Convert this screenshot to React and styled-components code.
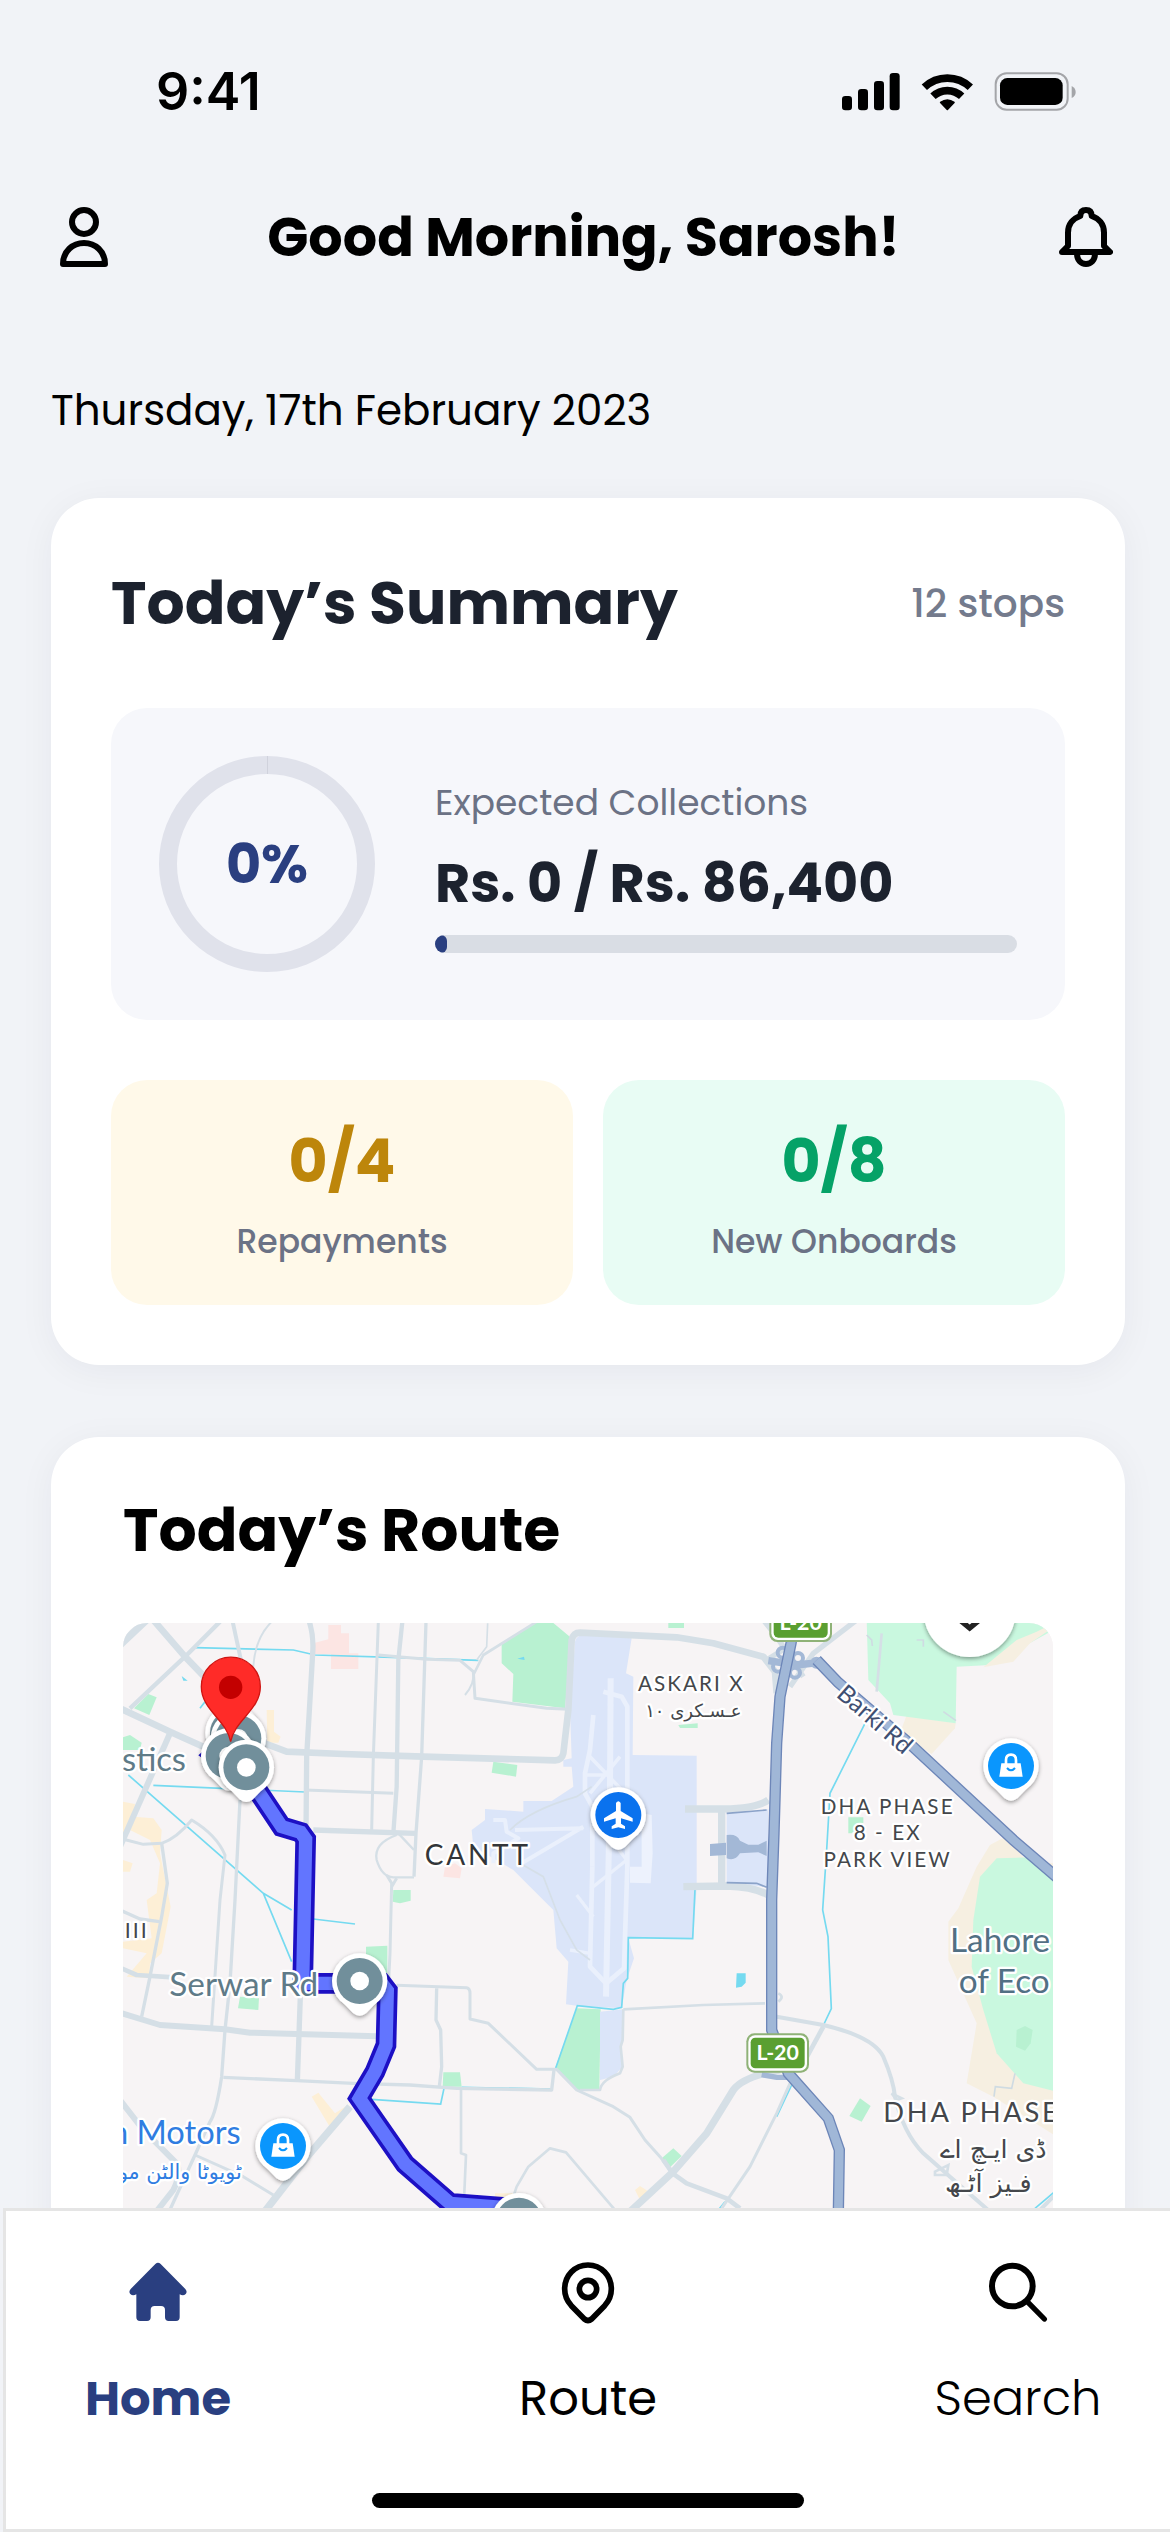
import React from 'react';
import styled, { createGlobalStyle } from 'styled-components';

const GlobalStyle = createGlobalStyle`
  * {
    box-sizing: border-box;
  }

  body {
    margin: 0;
    background: #f1f3f7;
    color: #000;
    font-family: 'Poppins', 'Inter', sans-serif;
  }

  h1, h2, p {
    margin: 0;
  }
`;

// Layout
const Screen = styled.div`
  display: flex;
  flex-direction: column;
  height: 100vh;
`;

const Scroll = styled.main`
  flex: 1;
  min-height: 0;
  overflow-y: auto;
  scrollbar-width: none;
`;

const Content = styled.div`
  display: flex;
  flex-direction: column;
  gap: 72px;
  padding: 0 45px 72px 51px;
`;

// Top of the screen
const StatusBar = styled.div`
  display: flex;
  align-items: center;
  justify-content: space-between;
  height: 183px;
  padding: 0 94px 0 156px;
`;

const Clock = styled.span`
  font-family: 'Inter', sans-serif;
  font-size: 52px;
  font-weight: 600;
`;

const TopBar = styled.header`
  display: flex;
  align-items: center;
  justify-content: space-between;
  height: 108px;
  padding: 0 57px 0 60px;
`;

const Greeting = styled.h1`
  font-size: 54px;
  font-weight: 700;
  line-height: 72px;
`;

const IconButton = styled.button`
  display: flex;
  padding: 0;
  border: 0;
  background: none;
  color: inherit;
  cursor: pointer;
`;

const DateLine = styled.p`
  padding: 90px 51px 57px;
  font-size: 42px;
  line-height: 60px;
`;

// Cards
const Card = styled.section`
  padding: ${(props) => props.$padding};
  border-radius: 48px;
  background: #fff;
  box-shadow: 0 6px 36px rgba(20, 20, 50, 0.05);
`;

const CardHeader = styled.div`
  display: flex;
  align-items: center;
  justify-content: space-between;
  margin-bottom: ${(props) => props.$gap};
`;

const CardTitle = styled.h2`
  color: ${(props) => props.$color};
  font-size: 60px;
  font-weight: 700;
  line-height: 90px;
`;

const StopCount = styled.span`
  color: #747b8d;
  font-size: 39px;
  font-weight: 500;
`;

const Collections = styled.div`
  display: flex;
  align-items: center;
  gap: 60px;
  margin-bottom: 60px;
  padding: 48px;
  border-radius: 36px;
  background: #f6f7fb;
`;

const Ring = styled.div`
  position: relative;
  display: flex;
  flex: none;
  align-items: center;
  justify-content: center;
  width: 216px;
  height: 216px;
  border: 18px solid #e0e2eb;
  border-radius: 50%;

  &::before {
    content: '';
    position: absolute;
    top: -18px;
    left: 50%;
    width: 1px;
    height: 18px;
    background: #d0d2dc;
  }
`;

const Percent = styled.span`
  color: #2a3f80;
  font-size: 54px;
  font-weight: 700;
`;

const CollectionInfo = styled.div`
  flex: 1;
`;

const CollectionLabel = styled.p`
  color: #6b7285;
  font-size: 36px;
  line-height: 56px;
`;

const Amount = styled.p`
  margin: 16px 0;
  color: #1c222e;
  font-size: 54px;
  font-weight: 700;
  line-height: 72px;
`;

const Track = styled.div`
  height: 18px;
  overflow: hidden;
  border-radius: 9px;
  background: #d9dde4;
`;

const Fill = styled.div`
  min-width: 12px;
  height: 100%;
  border-radius: 9px;
  background: #2a3f80;
`;

const Stats = styled.div`
  display: grid;
  grid-template-columns: 1fr 1fr;
  gap: 30px;
`;

const Stat = styled.div`
  padding: 36px 0 39px;
  border-radius: 36px;
  background: ${(props) => props.$background};
  text-align: center;
`;

const StatValue = styled.p`
  margin-bottom: 12px;
  color: ${(props) => props.$color};
  font-size: 60px;
  font-weight: 700;
  line-height: 90px;
`;

const StatLabel = styled.p`
  color: #6b7285;
  font-size: 33px;
  font-weight: 500;
  line-height: 48px;
`;

// Map
const MapFrame = styled.div`
  height: 660px;
  overflow: hidden;
  border-radius: 24px;
  background: #f7f4f5;
`;

const MapSvg = styled.svg`
  display: block;
  width: 100%;
  height: 100%;
  font-family: 'Lato', 'Inter', sans-serif;
`;

const MapLabel = styled.text`
  fill: ${(props) => props.$color || '#44474b'};
  stroke: #fff;
  stroke-width: 14px;
  stroke-linejoin: round;
  paint-order: stroke;
  font-size: ${(props) => props.$size}px;
  font-weight: 400;
  letter-spacing: ${(props) => (props.$tracked ? '0.1em' : 'normal')};
`;

const ArabicLabel = styled(MapLabel)`
  font-family: 'DejaVu Sans', sans-serif;
`;

// Bottom navigation
const BottomBar = styled.footer`
  flex: none;
  margin-left: 3px;
  padding-top: 51px;
  padding-bottom: 21px;
  border: solid #e5e5e5;
  border-width: 3px 0 3px 3px;
  background: #fff;
`;

const Nav = styled.nav`
  display: flex;
  justify-content: space-between;
  padding: 0 62px;
`;

const NavLink = styled.a`
  display: flex;
  flex-direction: column;
  align-items: center;
  gap: 41px;
  width: 180px;
  color: ${(props) => (props.$active ? '#2a3f80' : '#000')};
  font-size: 48px;
  font-weight: ${(props) => props.$weight};
  line-height: 72px;
  text-decoration: none;

  svg {
    overflow: visible;
  }
`;

const HomeIndicator = styled.div`
  width: 432px;
  height: 15px;
  margin: 58px auto 0;
  border-radius: 8px;
  background: #000;
`;

const StatusIcons = () => (
  <svg width="234" height="39" viewBox="67 66 702 117" aria-hidden="true">
    <rect x="67" y="138" width="30" height="43" rx="10" />
    <rect x="115" y="117" width="30" height="64" rx="10" />
    <rect x="163" y="93" width="30" height="88" rx="10" />
    <rect x="210" y="69" width="30" height="112" rx="10" />
    <path d="M314 112A100 100 0 0 1 452 112" fill="none" stroke="#000" strokeWidth="23" />
    <path d="M340 139A62 62 0 0 1 426 139" fill="none" stroke="#000" strokeWidth="23" />
    <path d="M363 157Q383 143 403 157L383 178Z" stroke="#000" strokeWidth="5" strokeLinejoin="round" />
    <rect x="528" y="70" width="216" height="109" rx="33" fill="none" stroke="#a4a5a9" strokeWidth="6" />
    <rect x="541" y="84" width="188" height="81" rx="22" />
    <path d="M756 108Q768 114 768 126Q768 138 756 144Z" fill="#a4a5a9" />
  </svg>
);

const UserIcon = () => (
  <svg width="48" height="60" viewBox="60 51 144 180" fill="none" stroke="currentColor" strokeWidth="18" strokeLinejoin="round">
    <circle cx="132" cy="96" r="36" />
    <path d="M69 222H195C195 184 166 159 132 159S69 184 69 222Z" />
  </svg>
);

const BellIcon = () => (
  <svg width="54" height="60" viewBox="717 471 162 180" fill="none" stroke="currentColor" strokeWidth="18" strokeLinejoin="round">
    <path d="M726 606L744 588V548C744 522 760 505 781 498C781 486 787 480 798 480S815 486 815 498C836 505 852 522 852 548V588L870 606Z" />
    <path d="M771 610C771 631 783 642 798 642S825 631 825 610" />
  </svg>
);

const HomeIcon = () => (
  <svg width="60" height="60" viewBox="83 66 180 180" fill="currentColor">
    <path d="M165 72Q173 65 181 72L255 147Q262 155 256 162Q249 169 238 163V232Q238 243 227 243H205Q194 243 194 232V210Q194 198 182 198H163Q151 198 151 210V232Q151 243 140 243H119Q108 243 108 232V163Q97 169 90 162Q84 155 91 147Z" />
  </svg>
);

const PinIcon = () => (
  <svg width="54" height="60" viewBox="59 66 162 180" fill="none" stroke="currentColor" strokeWidth="17" strokeLinejoin="round">
    <path d="M140 75C100 75 70 107 70 147C70 167 78 184 90 197L129 237Q140 246 151 237L190 197C202 184 210 167 210 147C210 107 180 75 140 75Z" />
    <circle cx="140" cy="147" r="26" />
  </svg>
);

const SearchIcon = () => (
  <svg width="60" height="60" viewBox="1299 66 180 180" fill="none" stroke="currentColor" strokeWidth="18" strokeLinecap="round">
    <circle cx="1372" cy="138" r="61" />
    <path d="M1419 187L1468 237" strokeWidth="16" />
  </svg>
);

const Marker = ({ x, y, color, children }) => (
  <g transform={`translate(${x} ${y})`}>
    <g filter="url(#markerShadow)" fill="#fff">
      <circle r="83" />
      <path d="M-70 44L-20 96Q0 112 20 96L70 44Z" />
    </g>
    <circle r="69" fill={color} />
    {children}
  </g>
);

const StopMarker = ({ x, y }) => (
  <Marker x={x} y={y} color="#718f9b">
    <circle r="28" fill="#fff" />
  </Marker>
);

const ShopMarker = ({ x, y }) => (
  <Marker x={x} y={y} color="#0a96fd">
    <path d="M-29 -8H29L35 32H-35Z" fill="#fff" />
    <path d="M-15 -5V-18Q-15 -34 0 -34T15 -18V-5" fill="none" stroke="#fff" strokeWidth="8" />
    <path d="M-12 6Q0 20 12 6" fill="none" stroke="#0a96fd" strokeWidth="6" />
  </Marker>
);

const RoadShield = ({ x, y }) => (
  <g transform={`translate(${x} ${y})`}>
    <rect x="-94" y="-59" width="188" height="118" rx="24" fill="#8fb277" />
    <rect x="-88" y="-53" width="176" height="106" rx="20" fill="#fff" />
    <rect x="-81" y="-46" width="162" height="92" rx="14" fill="#5a9f31" />
    <text y="22" textAnchor="middle" fill="#fff" fontSize="64" fontWeight="700">L-20</text>
  </g>
);

const ROUTE = 'M395 490L435 560L515 680L572 697L587 718L578 1150H815L832 1172L828 1335L795 1415L748 1495L885 1692L1020 1810L1220 1825';

const roads = [
  { width: 22, d: 'M30 135L115 55' },
  { width: 13, d: 'M60 325L225 170L330 65' },
  { width: 20, d: 'M130 60L225 170L360 310' },
  { width: 12, d: 'M368 65L395 190' },
  { width: 6, d: 'M485 65Q435 115 430 200' },
  { width: 16, d: 'M598 65Q612 110 608 160L590 470L588 700' },
  { width: 20, d: 'M30 325L180 395L290 445' },
  { width: 20, d: 'M450 425L530 455L700 462L940 470L1335 481Q1356 480 1360 460L1375 330L1385 120Q1390 98 1410 98L1700 112L1810 130L1960 170L1995 215L2000 280' },
  { width: 18, d: 'M180 400L30 740' },
  { width: 9, d: 'M805 65L790 470L785 690' },
  { width: 13, d: 'M877 65L865 180L860 560L850 700' },
  { width: 10, d: 'M948 65L935 470L918 700L912 830' },
  { width: 9, d: 'M805 165L950 178L1050 181L1090 215L1095 295L1310 325L1375 328' },
  { width: 8, d: 'M1280 65L1120 165L1090 225' },
  { width: 5, d: 'M1133 70L1130 140L1100 180' },
  { width: 6, d: 'M1090 215Q1095 250 1065 285' },
  { width: 9, d: 'M585 570L850 580' },
  { width: 16, d: 'M610 690L915 700' },
  { width: 7, d: 'M860 705Q790 730 800 780Q815 830 850 832H912M865 700L912 750' },
  { width: 9, d: 'M830 825L845 850L840 1060L835 1160M860 835L845 860' },
  { width: 9, d: 'M30 715L100 733L155 730Q200 715 245 660Q320 705 345 765L330 900L305 1280' },
  { width: 10, d: 'M155 730L172 850L155 950L120 1130L95 1250' },
  { width: 10, d: 'M390 600L375 900L360 1150L345 1290L335 1430Q318 1540 300 1565L255 1665L175 1840' },
  { width: 10, d: 'M30 930L90 957L148 965' },
  { width: 14, d: 'M30 1103L80 1125L190 1132' },
  { width: 18, d: 'M30 1238L150 1275L345 1288L420 1298L560 1302L800 1309' },
  { width: 16, d: 'M572 1160L562 1445' },
  { width: 10, d: 'M340 1432L560 1442L730 1450L900 1455L1040 1465L1325 1470L1332 1410' },
  { width: 9, d: 'M860 1156L1070 1163Q1080 1165 1080 1180V1257L1135 1270L1280 1408H1340L1400 1470L1510 1520L1560 1552L1605 1620L1650 1670L1688 1720' },
  { width: 10, d: 'M980 1165L978 1260L992 1290L995 1400L988 1460' },
  { width: 8, d: 'M1053 1470V1660L1068 1665L1062 1800' },
  { width: 8, d: 'M1210 1790L1220 1760L1255 1700L1320 1645L1368 1657L1515 1830' },
  { width: 22, d: 'M720 1520L600 1660L460 1840' },
  { width: 18, d: 'M30 1500L100 1590L200 1690Q215 1720 190 1770L135 1840' },
  { width: 9, d: 'M255 1665L400 1730L490 1785' },
  { width: 16, d: 'M1960 60L2000 110L2080 230M2240 60L2110 160L2040 260M1970 180L2050 130' },
  { width: 22, d: 'M1725 627H1840Q1940 625 1975 600M1835 627V860M1720 860L1850 858Q1930 860 1975 885' },
  { width: 8, d: 'M1540 1228L1780 1215L1965 1210M1540 1228L1538 1320L1532 1340L1538 1400L1530 1420Q1475 1440 1470 1470H1410' },
  { width: 12, d: 'M2000 1250L2140 1275Q2290 1310 2320 1370Q2350 1440 2355 1490Q2380 1600 2440 1660L2520 1730L2640 1835' },
  { width: 14, d: 'M2140 1280L2080 1390' },
  { width: 22, d: 'M2010 1410Q1900 1430 1870 1470L1790 1600L1690 1715L1560 1835' },
  { width: 9, d: 'M2040 1450L2000 1540L1920 1700L1835 1825' },
  { width: 14, d: 'M1660 1680L1688 1720L1730 1750L1850 1795L1890 1825' },
  { width: 8, d: 'M2315 100L2300 275' },
  { width: 12, d: 'M2790 1830L2840 1780' },
];

const parks = [
  'M1175 130L1275 69H1330L1385 115L1365 325L1207 305L1210 222L1175 190Z',
  'M115 282L140 292L118 345L72 325Z',
  'M39 412L60 405L95 428L90 450H39Z',
  'M1150 485L1222 495L1218 530L1145 518Z',
  'M850 870H902V902L870 910L848 905Z',
  'M768 1040L832 1037V1120H768Z',
  'M390 1190L447 1192L445 1230L384 1225Z',
  'M1000 1417H1050L1055 1460H998Z',
  'M1400 1225L1472 1228L1468 1470H1400L1335 1405Z',
  'M1675 69H1722V84H1675Z',
  'M2215 652H2260V670L2225 700H2215Z',
  'M2250 1495L2282 1518L2255 1565L2218 1548Z',
  'M1690 1645L1715 1668L1680 1702L1655 1675Z',
  'M1705 375L1763 370V384H1710Z',
];

const golf = [
  'M2270 60H2840V85L2640 195L2540 200L2537 370L2350 345L2340 310L2275 240Z',
  'M2840 810L2760 772L2660 775L2610 830L2590 960L2585 1100L2620 1230L2660 1360L2740 1450L2840 1475Z',
];

const waterways = [
  'M255 143L550 150L615 165L870 173L1105 181',
  'M130 556L585 576',
  'M55 525L460 880L545 930M460 880L545 1085M610 957L735 972',
  'M270 325L285 305',
  'M785 1498L992 1512L1002 1465M1055 1462L1325 1467M1337 1405L1402 1217L1510 1228L1535 1222L1540 1150L1553 1135L1555 1013L1748 1016L1755 868',
  'M2265 370L2160 580L2150 750L2138 930L2154 1010L2164 1226L2142 1272',
  'M2045 1455L2000 1550M1845 1805L1825 1830M2775 1825L2840 1770',
];

const RouteMap = () => (
  <MapFrame>
    <MapSvg viewBox="39 69 2790 1980" preserveAspectRatio="xMidYMin slice" role="img" aria-label="Map of today's route">
      <defs>
        <filter id="markerShadow" x="-30%" y="-30%" width="160%" height="170%">
          <feDropShadow dx="0" dy="5" stdDeviation="6" floodOpacity="0.4" />
        </filter>
      </defs>
      <rect x="39" y="69" width="2790" height="1980" fill="#f7f4f5" />

      <g fill="#fdefd6">
        <path d="M470 330H492V395L512 410L505 428H472Z" />
        <path d="M39 605L75 612L70 650L130 655L155 690L150 760L182 920L155 1060L120 1090L118 1135L50 1130L110 1060L39 1045V1025L125 1015L110 900L140 880L150 790L120 720L60 690L39 700Z" />
        <path d="M39 780L68 790L60 815H39ZM605 1490L625 1478L675 1540L705 1520L720 1535L665 1590Z" />
        <path d="M1155 1780H1210V1800H1155ZM1575 1770L1590 1758L1612 1772L1590 1800Z" />
      </g>
      <g fill="#fce5e3">
        <path d="M655 75H693V100H717V160H745V207H663V162H615V128L655 118Z" />
        <path d="M1005 800L1035 790L1055 805L1050 835L1000 830Z" />
      </g>
      <g fill="#f6efe1">
        <path d="M2390 345L2537 370L2535 385L2465 462L2370 400Z" />
        <path d="M2840 790L2750 785L2690 708L2640 735L2600 800L2545 925L2515 965V1080L2600 1270L2570 1450L2650 1490L2840 1610Z" />
      </g>
      <g fill="#b8f1d1">
        {parks.map((d) => <path key={d} d={d} />)}
      </g>
      <g fill="#c9f8df">
        {golf.map((d) => <path key={d} d={d} />)}
      </g>
      <path d="M2840 65L2780 95L2720 120L2620 202L2710 185L2760 130L2840 75Z" fill="#f6efe1" />
      <path d="M2720 1290L2745 1278L2768 1290L2762 1330L2745 1352L2718 1340Z" fill="#b8f1d1" />

      <path d="M1395 125Q1400 105 1420 105L1565 115L1548 220L1570 230L1568 465L1760 467V860L1750 1015H1555L1572 1075L1550 1140L1535 1225L1400 1217L1368 1213L1375 1085L1340 1045L1330 930L1260 860L1210 810L1090 740L1085 690L1125 660V627L1240 635V603H1325L1390 560L1385 500H1360V480L1385 475L1380 330Z" fill="#dbe5f9" />
      <path d="M1850 640L1975 628V862L1850 848ZM1470 1235L1540 1228L1538 1320L1530 1345L1538 1400L1510 1430L1470 1440Z" fill="#dbe5f9" />
      <path d="M1595 640L1625 645L1628 760L1622 850L1560 848V800H1595Z" fill="#edf2fd" />
      <g fill="none" stroke="#eaf0fc" strokeWidth="14" strokeLinejoin="round">
        <path d="M1502 235L1500 560L1488 1190" strokeWidth="18" />
        <path d="M1480 275L1535 290L1552 320L1552 800L1542 1105L1488 1150L1440 1100L1447 800" />
        <path d="M1450 345L1440 450L1425 520V580L1447 620V800" />
        <path d="M1440 470L1545 580M1440 580L1530 470M1430 525H1490" strokeWidth="11" />
        <path d="M1150 660H1185L1190 695L1225 715L1150 760V790M1215 690L1420 685M1235 790L1420 680" strokeWidth="12" />
        <path d="M1400 885L1450 950M1450 650L1550 780M1450 860L1550 780M1380 1050L1440 1060" strokeWidth="10" />
      </g>
      <path d="M1200 690Q1260 630 1400 590L1445 560" fill="none" stroke="#d5dfe8" strokeWidth="5" />
      <path d="M1230 790L1300 830L1350 960L1400 1050L1440 1080" fill="none" stroke="#d5dfe8" strokeWidth="5" />

      <g fill="none" stroke="#75daf0" strokeWidth="5">
        {waterways.map((d) => <path key={d} d={d} />)}
      </g>
      <path d="M1880 1120H1907V1148L1895 1160L1878 1163ZM215 228L233 242H220ZM1222 176L1242 170L1244 180Z" fill="#75daf0" />

      <g fill="none" stroke="#d5dfe6" strokeLinejoin="round">
        {roads.map((road) => <path key={road.d} d={road.d} strokeWidth={road.width} />)}
      </g>
      <path d="M2270 105L2285 120L2287 138M2420 120H2440V140M2500 335L2538 362M2652 1490L2656 1460L2705 1465L2715 1420" fill="none" stroke="#cfdbe2" strokeWidth="5" />
      <path d="M2360 1500L2345 1480L2375 1495ZM2475 1715L2515 1695L2510 1725H2475ZM2005 1180Q2025 1190 2005 1205" fill="none" stroke="#d5dfe6" strokeWidth="8" />

      <path d="M1850 705Q1880 700 1890 722L1915 734H1945L1970 722V768L1945 757L1890 760Q1875 785 1850 775ZM1800 732L1848 728V765L1800 768Z" fill="#a3b8d6" />
      <path d="M1850 640L1970 630M1850 848L1940 850L1970 862" fill="none" stroke="#8ba3c9" strokeWidth="5" />
      <g fill="none" stroke="#a3b8d6" strokeWidth="12">
        <circle cx="2018" cy="158" r="15" />
        <circle cx="2064" cy="174" r="15" />
        <circle cx="2004" cy="200" r="15" />
        <circle cx="2055" cy="218" r="15" />
        <path d="M1975 182L2060 195L2125 188" strokeWidth="22" />
        <path d="M1955 1424L2000 1432H2060" strokeWidth="16" />
      </g>
      <circle cx="2119" cy="188" r="18" fill="#a3b8d6" />
      {['M2055 60L2043 130L2010 290L2000 430L1992 700L1985 900V1290L2035 1420L2155 1555L2188 1650L2185 1840', 'M2120 180L2185 248L2400 432L2710 720L2850 840'].map((d) => (
        <g key={d} fill="none">
          <path d={d} stroke="#6d86b8" strokeWidth="34" />
          <path d={d} stroke="#a0b7d7" strokeWidth="26" />
        </g>
      ))}

      <path d={ROUTE} fill="none" stroke="#1d10c4" strokeWidth="62" />
      <path d={ROUTE} fill="none" stroke="#6275ff" strokeWidth="40" />
      <path d="M265 466L276 456V474Z" fill="#1d10c4" />

      <MapLabel x="228" y="513" textAnchor="end" $size="98" $color="#5f7b88">stics</MapLabel>
      <MapLabel x="44" y="1015" $size="64" $tracked>III</MapLabel>
      <MapLabel x="178" y="1187" $size="100" $color="#5f7b88">Serwar Rd</MapLabel>
      <MapLabel x="944" y="795" $size="84" $tracked $color="#333639">CANTT</MapLabel>
      <MapLabel x="392" y="1633" textAnchor="end" $size="98" $color="#2f7de1">n Motors</MapLabel>
      <ArabicLabel x="395" y="1738" direction="rtl" $size="62" $color="#2f7de1">ٹویوٹا والٹن مو</ArabicLabel>

      <MapLabel x="1744" y="274" textAnchor="middle" $size="62" $tracked>ASKARI X</MapLabel>
      <ArabicLabel x="1750" y="352" direction="rtl" textAnchor="middle" $size="54">عـسـکری ۱۰</ArabicLabel>
      <MapLabel x="2333" y="641" textAnchor="middle" $size="62" $tracked>DHA PHASE</MapLabel>
      <MapLabel x="2333" y="721" textAnchor="middle" $size="62" $tracked>8 - EX</MapLabel>
      <MapLabel x="2333" y="800" textAnchor="middle" $size="62" $tracked>PARK VIEW</MapLabel>
      <MapLabel x="2520" y="1056" $size="100" $color="#527084">Lahore</MapLabel>
      <MapLabel x="2546" y="1179" $size="100" $color="#527084">of Eco</MapLabel>
      <MapLabel x="2320" y="1565" $size="82" $tracked>DHA PHASE</MapLabel>
      <ArabicLabel x="2810" y="1675" direction="rtl" $size="76">ڈی ایـچ اے</ArabicLabel>
      <ArabicLabel x="2765" y="1775" direction="rtl" $size="76">فـیز آٹـھ</ArabicLabel>
      <MapLabel x="0" y="0" transform="translate(2176 288) rotate(41)" $size="74" $color="#3f4f72">Barki Rd</MapLabel>

      <Marker x={1525} y={645} color="#0a72ee">
        <path d="M-7 -36Q0 -46 7 -36V-12L43 10V20L8 10V26L20 34V42L0 37L-20 42V34L-8 26V10L-43 20V10L-7 -12Z" fill="#fff" />
      </Marker>
      <ShopMarker x={2703} y={498} />
      <ShopMarker x={519} y={1638} />
      <RoadShield x={2072} y={67} />
      <RoadShield x={2003} y={1359} />

      <StopMarker x={369} y={398} />
      <StopMarker x={385} y={415} />
      <StopMarker x={356} y={468} />
      <StopMarker x={409} y={502} />
      <StopMarker x={749} y={1143} />
      <StopMarker x={1227} y={1862} />
      <path d="M362 425C350 360 274 330 274 260A88 88 0 0 1 451 260C451 330 374 360 362 425Z" fill="#ff2b28" stroke="#cf1512" strokeWidth="4" />
      <circle cx="362" cy="262" r="35" fill="#c30000" />

      <circle cx="2579" cy="32" r="139" fill="#fff" filter="url(#markerShadow)" />
      <path d="M2535 48L2579 84L2623 48" fill="none" stroke="#222" strokeWidth="16" />
    </MapSvg>
  </MapFrame>
);

const stats = [
  { value: '0/4', label: 'Repayments', color: '#bd860b', background: '#fff9e9' },
  { value: '0/8', label: 'New Onboards', color: '#05a267', background: '#e8fcf4' },
];

const App = () => {
  const collected = 0;
  const expected = 86400;
  const percent = Math.round((collected / expected) * 100);

  return (
    <Screen>
      <GlobalStyle />
      <Scroll>
        <StatusBar>
          <Clock>9:41</Clock>
          <StatusIcons />
        </StatusBar>
        <TopBar>
          <IconButton type="button" aria-label="Profile">
            <UserIcon />
          </IconButton>
          <Greeting>Good Morning, Sarosh!</Greeting>
          <IconButton type="button" aria-label="Notifications">
            <BellIcon />
          </IconButton>
        </TopBar>
        <DateLine>Thursday, 17th February 2023</DateLine>
        <Content>
          <Card $padding="60px">
            <CardHeader $gap="60px">
              <CardTitle $color="#1c222e">Today’s Summary</CardTitle>
              <StopCount>12 stops</StopCount>
            </CardHeader>
            <Collections>
              <Ring>
                <Percent>{percent}%</Percent>
              </Ring>
              <CollectionInfo>
                <CollectionLabel>Expected Collections</CollectionLabel>
                <Amount>Rs. {collected} / Rs. {expected.toLocaleString('en-US')}</Amount>
                <Track>
                  <Fill style={{ width: `${percent}%` }} />
                </Track>
              </CollectionInfo>
            </Collections>
            <Stats>
              {stats.map((stat) => (
                <Stat key={stat.label} $background={stat.background}>
                  <StatValue $color={stat.color}>{stat.value}</StatValue>
                  <StatLabel>{stat.label}</StatLabel>
                </Stat>
              ))}
            </Stats>
          </Card>
          <Card $padding="48px 72px 72px">
            <CardHeader $gap="48px">
              <CardTitle $color="#000">Today’s Route</CardTitle>
            </CardHeader>
            <RouteMap />
          </Card>
        </Content>
      </Scroll>
      <BottomBar>
        <Nav>
          <NavLink href="#home" $active $weight={700}>
            <HomeIcon />
            Home
          </NavLink>
          <NavLink href="#route" $weight={400}>
            <PinIcon />
            Route
          </NavLink>
          <NavLink href="#search" $weight={300}>
            <SearchIcon />
            Search
          </NavLink>
        </Nav>
        <HomeIndicator />
      </BottomBar>
    </Screen>
  );
};

export default App;
